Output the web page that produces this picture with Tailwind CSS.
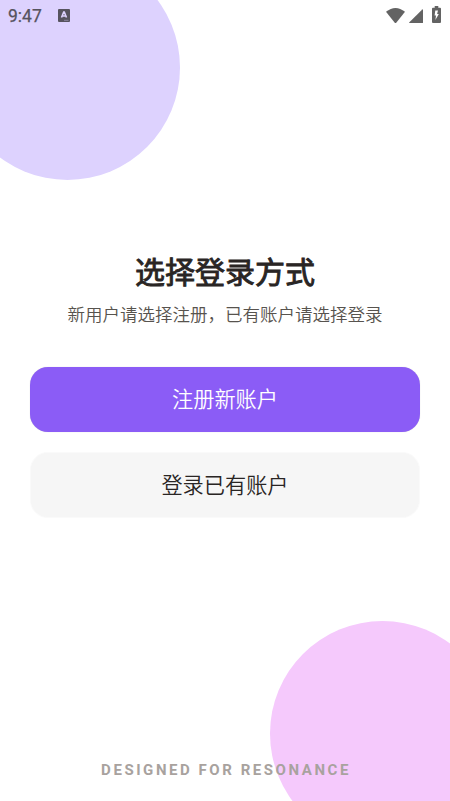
<!DOCTYPE html>
<html lang="zh-CN">
<head>
<meta charset="utf-8">
<title>选择登录方式</title>
<script src="https://cdn.jsdelivr.net/npm/@tailwindcss/browser@4"></script>
</head>
<body class="bg-white">
<div class="relative flex h-[801px] w-[450px] flex-col overflow-hidden bg-white font-['Roboto','Noto_Sans_CJK_SC',sans-serif]">
  <div class="absolute -left-[45px] -top-[45px] size-[225px] rounded-full bg-[#ddd2fe]"></div>
  <div class="absolute left-[270px] top-[621px] size-[225px] rounded-full bg-[#f5c9fc]"></div>
  <header class="relative flex h-[30px] items-center pl-2 pr-2 text-[#56535e]">
    <span class="pt-px text-[17.5px] font-normal leading-[30px] [-webkit-text-stroke:0.25px_currentColor]">9:47</span>
    <svg class="ml-4 h-[13px] w-3" viewBox="0 0 12 13"><rect width="12" height="13" rx="1" fill="currentColor"/><path d="M3.500 8.500 5.700 3H6.300L8.500 8.500M4.500 7h3" fill="none" stroke="#ddd2fe" stroke-width="1.6"/><path d="M6 11.300h4.500" stroke="#ddd2fe" stroke-opacity=".5" stroke-width=".8"/></svg>
    <svg class="ml-auto h-[15px] w-[19px]" viewBox="0 0 20 15" preserveAspectRatio="none" fill="#636363"><path d="M0 3.800Q10-3.800 20 3.800L11 14.400Q10 15.400 9 14.400Z"/></svg>
    <svg class="ml-[4px] mt-px size-[14px]" viewBox="0 0 14 14" fill="#636363"><path d="M14 .6V13.500Q14 14 13.500 14H.6Q-.2 14 .4 13.300L13.300.4Q14-.2 14 .6Z"/></svg>
    <svg class="ml-[9px] mr-px h-[17px] w-[9px] -translate-y-px" viewBox="0 0 9 17" fill="#636363"><path d="M2.700 0h3.600v1.700H8q1 0 1 1V16q0 1-1 1H1q-1 0-1-1V2.700q0-1 1-1h1.700Z"/><path d="M6 4.500H3.300L2.600 9.500H4L3.400 14 6.800 8H5.100Z" fill="#fff"/></svg>
  </header>
  <main class="relative flex flex-col items-center px-[30px] pt-[221px]">
    <h1 class="text-[30px] font-normal leading-[44px] text-[#292524] [-webkit-text-stroke:0.9px_currentColor]">选择登录方式</h1>
    <p class="mt-[7px] text-[17.5px] font-[350] leading-[26px] text-[#57534e]">新用户请选择注册，已有账户请选择登录</p>
    <button class="mt-[39px] h-[65px] w-full rounded-[18px] bg-[#8b5cf6] pt-px text-[21.2px] font-[350] text-white shadow-[0_0_1px_rgba(0,0,0,0.2)]">注册新账户</button>
    <button class="mt-5 h-[66px] w-full rounded-[18px] border border-[#fafafa] bg-[#f6f6f6] pt-px text-[21.2px] font-[350] text-[#292524]">登录已有账户</button>
  </main>
  <footer class="relative mt-auto pb-[21px] pl-[2px] text-center text-[15px] font-bold leading-5 tracking-[2.55px] text-[#a8a29e]">DESIGNED FOR RESONANCE</footer>
</div>
</body>
</html>
